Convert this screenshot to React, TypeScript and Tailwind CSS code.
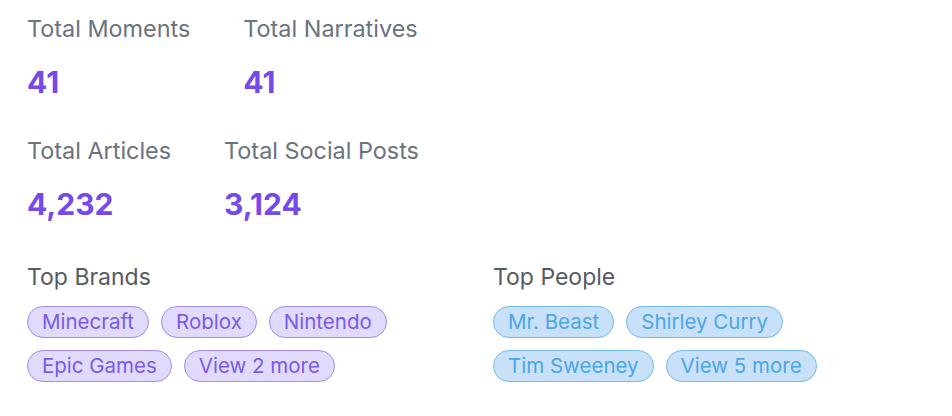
const stats = [
  [
    { label: "Total Moments", value: "41" },
    { label: "Total Narratives", value: "41" },
  ],
  [
    { label: "Total Articles", value: "4,232" },
    { label: "Total Social Posts", value: "3,124" },
  ],
];

const brands = ["Minecraft", "Roblox", "Nintendo", "Epic Games", "View 2 more"];
const people = ["Mr. Beast", "Shirley Curry", "Tim Sweeney", "View 5 more"];

function Chip({ text, tone }: { text: string; tone: "purple" | "blue" }) {
  const cls =
    tone === "purple"
      ? "border-[#a58bf3] bg-[#e1dafd] text-[#7a5ae6]"
      : "border-[#72bbee] bg-[#c8e1f8] text-[#4ba6e6]";
  return (
    <span className={`inline-flex h-8 items-center rounded-full border px-[14px] text-[20.5px] leading-none ${cls}`}>
      {text}
    </span>
  );
}

export default function App() {
  return (
    <div
      className="h-[416px] w-[952px] bg-white px-[27px] pt-[15px]"
      style={{ fontFamily: "Inter, 'Noto Sans', sans-serif" }}
    >
      <div className="flex flex-col gap-[37px]">
        {stats.map((row, i) => (
          <div key={i} className="flex gap-[53px]">
            {row.map((s) => (
              <div key={s.label} className="flex flex-col">
                <span className="text-[23.4px] leading-[28px] text-[#6b7280]">{s.label}</span>
                <span className="mt-[21px] text-[30px] font-bold leading-[36px] text-[#7549ea]">{s.value}</span>
              </div>
            ))}
          </div>
        ))}
      </div>
      <div className="mt-[41px] grid grid-cols-[466px_1fr]">
        <Group title="Top Brands" items={brands} tone="purple" />
        <Group title="Top People" items={people} tone="blue" />
      </div>
    </div>
  );
}

function Group({ title, items, tone }: { title: string; items: string[]; tone: "purple" | "blue" }) {
  return (
    <div className="flex flex-col">
      <span className="text-[23px] leading-[28px] text-[#555a63]">{title}</span>
      <div className="mt-[15px] flex max-w-[400px] flex-wrap gap-[12px]">
        {items.map((t) => (
          <Chip key={t} text={t} tone={tone} />
        ))}
      </div>
    </div>
  );
}
